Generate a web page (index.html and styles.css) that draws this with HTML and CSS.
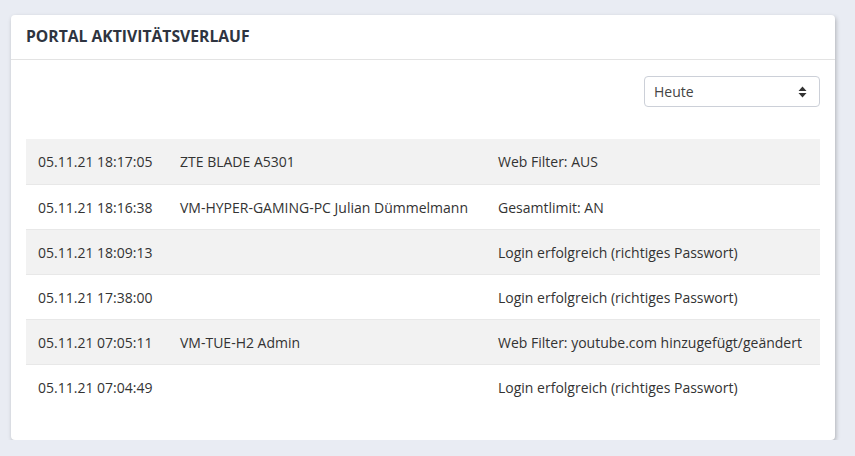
FILE: index.html
```html
<!DOCTYPE html>
<html lang="de">
<head>
  <meta charset="UTF-8" />
  <title>Portal Aktivitätsverlauf</title>
  <link rel="stylesheet" href="styles.css">
</head>
<body>

<div class="card">
  <div class="card-header">Portal Aktivitätsverlauf</div>
  <div class="card-body">
    <div class="toolbar">
      <div class="select-box">
        <span>Heute</span>
        <svg width="9" height="12" viewBox="0 0 9 12"><path d="M4.5 0.5 L8.5 5 L0.5 5 Z M4.5 11.5 L8.5 7 L0.5 7 Z" fill="#333"/></svg>
      </div>
    </div>

    <table class="log-table">
      <tbody>
        <tr><td>05.11.21 18:17:05</td><td>ZTE BLADE A5301</td><td>Web Filter: AUS</td></tr>
        <tr><td>05.11.21 18:16:38</td><td>VM-HYPER-GAMING-PC Julian Dümmelmann</td><td>Gesamtlimit: AN</td></tr>
        <tr><td>05.11.21 18:09:13</td><td></td><td>Login erfolgreich (richtiges Passwort)</td></tr>
        <tr><td>05.11.21 17:38:00</td><td></td><td>Login erfolgreich (richtiges Passwort)</td></tr>
        <tr><td>05.11.21 07:05:11</td><td>VM-TUE-H2 Admin</td><td>Web Filter: youtube.com hinzugefügt/geändert</td></tr>
        <tr><td>05.11.21 07:04:49</td><td></td><td>Login erfolgreich (richtiges Passwort)</td></tr>
      </tbody>
    </table>
  </div>
</div>

</body>
</html>
```

FILE: styles.css
```css
body {
  font-family: "Open Sans", sans-serif;
  margin: 0;
  padding: 15px 20px 0 11px;
  background-color: #e9ecf3;
  color: #333;
}

.card {
  width: 824px;
  background-color: #fff;
  border-radius: 4px;
  box-shadow: 1px 2px 4px rgba(0, 0, 0, 0.25);
}

.card-header {
  height: 45px;
  box-sizing: border-box;
  padding: 10px 15px 0;
  border-bottom: 1px solid #e3e3e3;
  font-size: 15.7px;
  font-weight: bold;
  text-transform: uppercase;
  color: #2e3440;
}

.card-body {
  padding: 16px 15px 31px;
}

.toolbar {
  display: flex;
  justify-content: flex-end;
  margin-bottom: 32px;
}

.select-box {
  width: 176px;
  height: 31px;
  box-sizing: border-box;
  border: 1px solid #ccd0d8;
  border-radius: 4px;
  padding: 0 12px 0 9px;
  display: flex;
  align-items: center;
  justify-content: space-between;
  font-size: 14px;
  color: #444;
}

.log-table {
  width: 100%;
  border-collapse: collapse;
  font-size: 14px;
}

.log-table td {
  height: 44px;
  padding: 0 12px;
  border-top: 1px solid #e8e8e8;
}

.log-table tr:first-child td {
  border-top: none;
  height: 45px;
}

.log-table td:nth-child(1) {
  width: 118px;
}

.log-table td:nth-child(2) {
  width: 294px;
}

.log-table tbody tr:nth-child(odd) {
  background-color: #f2f2f2;
}
```
